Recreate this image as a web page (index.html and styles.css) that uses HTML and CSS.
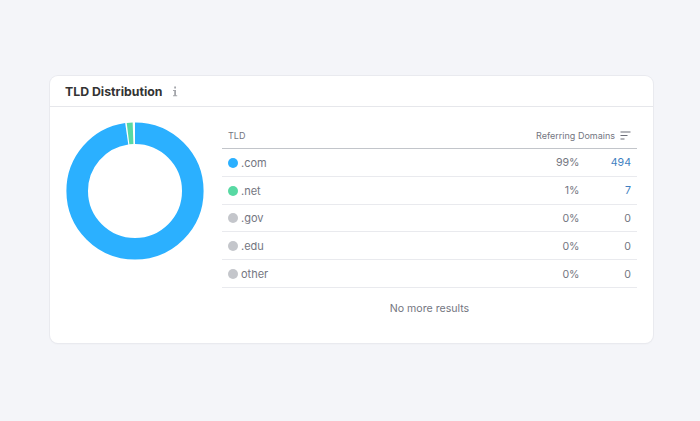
FILE: index.html
```html
<!DOCTYPE html>
<html lang="en">
<head>
<meta charset="utf-8">
<title>TLD Distribution</title>
<link rel="stylesheet" href="styles.css">
</head>
<body>
<section class="card">
  <header class="card-head">
    <h2 class="title">TLD Distribution</h2>
    <svg class="info" width="6" height="11" viewBox="0 0 6 11"><path d="M2.200 0.500h1.800v2h-1.800zM1 4h3v5.200h1.200v1.100H1V9.200h1.200V5.100H1z" fill="#a4a6ab"/></svg>
  </header>
  <div class="card-body">
    <svg class="donut" width="138" height="138" viewBox="0 0 138 138">
      <circle class="seg seg-blue" cx="69" cy="69" r="57.800" pathLength="360" stroke-dasharray="351.700 8.300"/>
      <circle class="seg seg-green" cx="69" cy="69" r="57.800" pathLength="360" stroke-dasharray="5 355" stroke-dashoffset="-353"/>
    </svg>
    <div class="table">
      <div class="row head">
        <span class="name">TLD</span>
        <span class="sort">Referring Domains
          <svg width="11" height="9" viewBox="0 0 11 9"><path d="M0.500 1h10M0.500 4.500h7M0.500 8h4" stroke="#6c6e79" stroke-width="1.200" fill="none"/></svg>
        </span>
      </div>
      <div class="row"><i class="dot blue"></i><span class="name">.com</span><span class="pct">99%</span><span class="num link">494</span></div>
      <div class="row"><i class="dot green"></i><span class="name">.net</span><span class="pct">1%</span><span class="num link">7</span></div>
      <div class="row"><i class="dot"></i><span class="name">.gov</span><span class="pct">0%</span><span class="num">0</span></div>
      <div class="row"><i class="dot"></i><span class="name">.edu</span><span class="pct">0%</span><span class="num">0</span></div>
      <div class="row"><i class="dot"></i><span class="name">other</span><span class="pct">0%</span><span class="num">0</span></div>
      <p class="empty">No more results</p>
    </div>
  </div>
</section>
</body>
</html>
```
FILE: styles.css
```css
* { box-sizing: border-box; }
html, body { margin: 0; height: 100%; }
body {
  background: #f4f5f9;
  padding: 76px 47px 0 50px;
  font-family: Inter, "Liberation Sans", sans-serif;
  color: #74767f;
  overflow: hidden;
}
.card {
  height: 267px;
  background: #fff;
  border-radius: 8px;
  box-shadow: 0 0 0 1px #e9eaef, 0 1px 2px rgba(0, 0, 0, 0.05);
}
.card-head {
  height: 31px;
  display: flex;
  align-items: center;
  gap: 10px;
  padding: 0 15px;
  border-bottom: 1px solid #e6e7eb;
}
.title {
  margin: 0;
  font-size: 12.300px;
  font-weight: 700;
  color: #333;
}
.card-body {
  display: flex;
  padding: 15px 16px 0 15.500px;
  gap: 18.500px;
}
.donut { flex: none; transform: rotate(-90deg); }
.seg { fill: none; stroke-width: 21.600; }
.seg-blue { stroke: #2bb0ff; }
.seg-green { stroke: #58d9a3; }
.table { flex: 1; }
.row {
  height: 27.800px;
  display: flex;
  align-items: center;
  padding: 1px 6px 0;
  font-size: 11px;
  border-bottom: 1px solid #e9eaee;
}
.row.head {
  height: 27px;
  justify-content: space-between;
  font-size: 9px;
  padding-top: 0;
  border-bottom-color: #c2c5ca;
}
.sort { display: flex; align-items: center; gap: 5px; }
.dot {
  width: 10px;
  height: 10px;
  border-radius: 50%;
  background: #c4c6cb;
  margin-right: 3px;
  flex: none;
}
.dot.blue { background: #2bb0ff; }
.dot.green { background: #58d9a3; }
.name { flex: none; }
.pct { margin-left: auto; font-size: 10.600px; }
.num { width: 51.500px; text-align: right; font-size: 10.600px; }
.link { color: #3f7fc1; }
.empty { margin: 14px 0 0; text-align: center; font-size: 10.600px; line-height: 14px; }
```
